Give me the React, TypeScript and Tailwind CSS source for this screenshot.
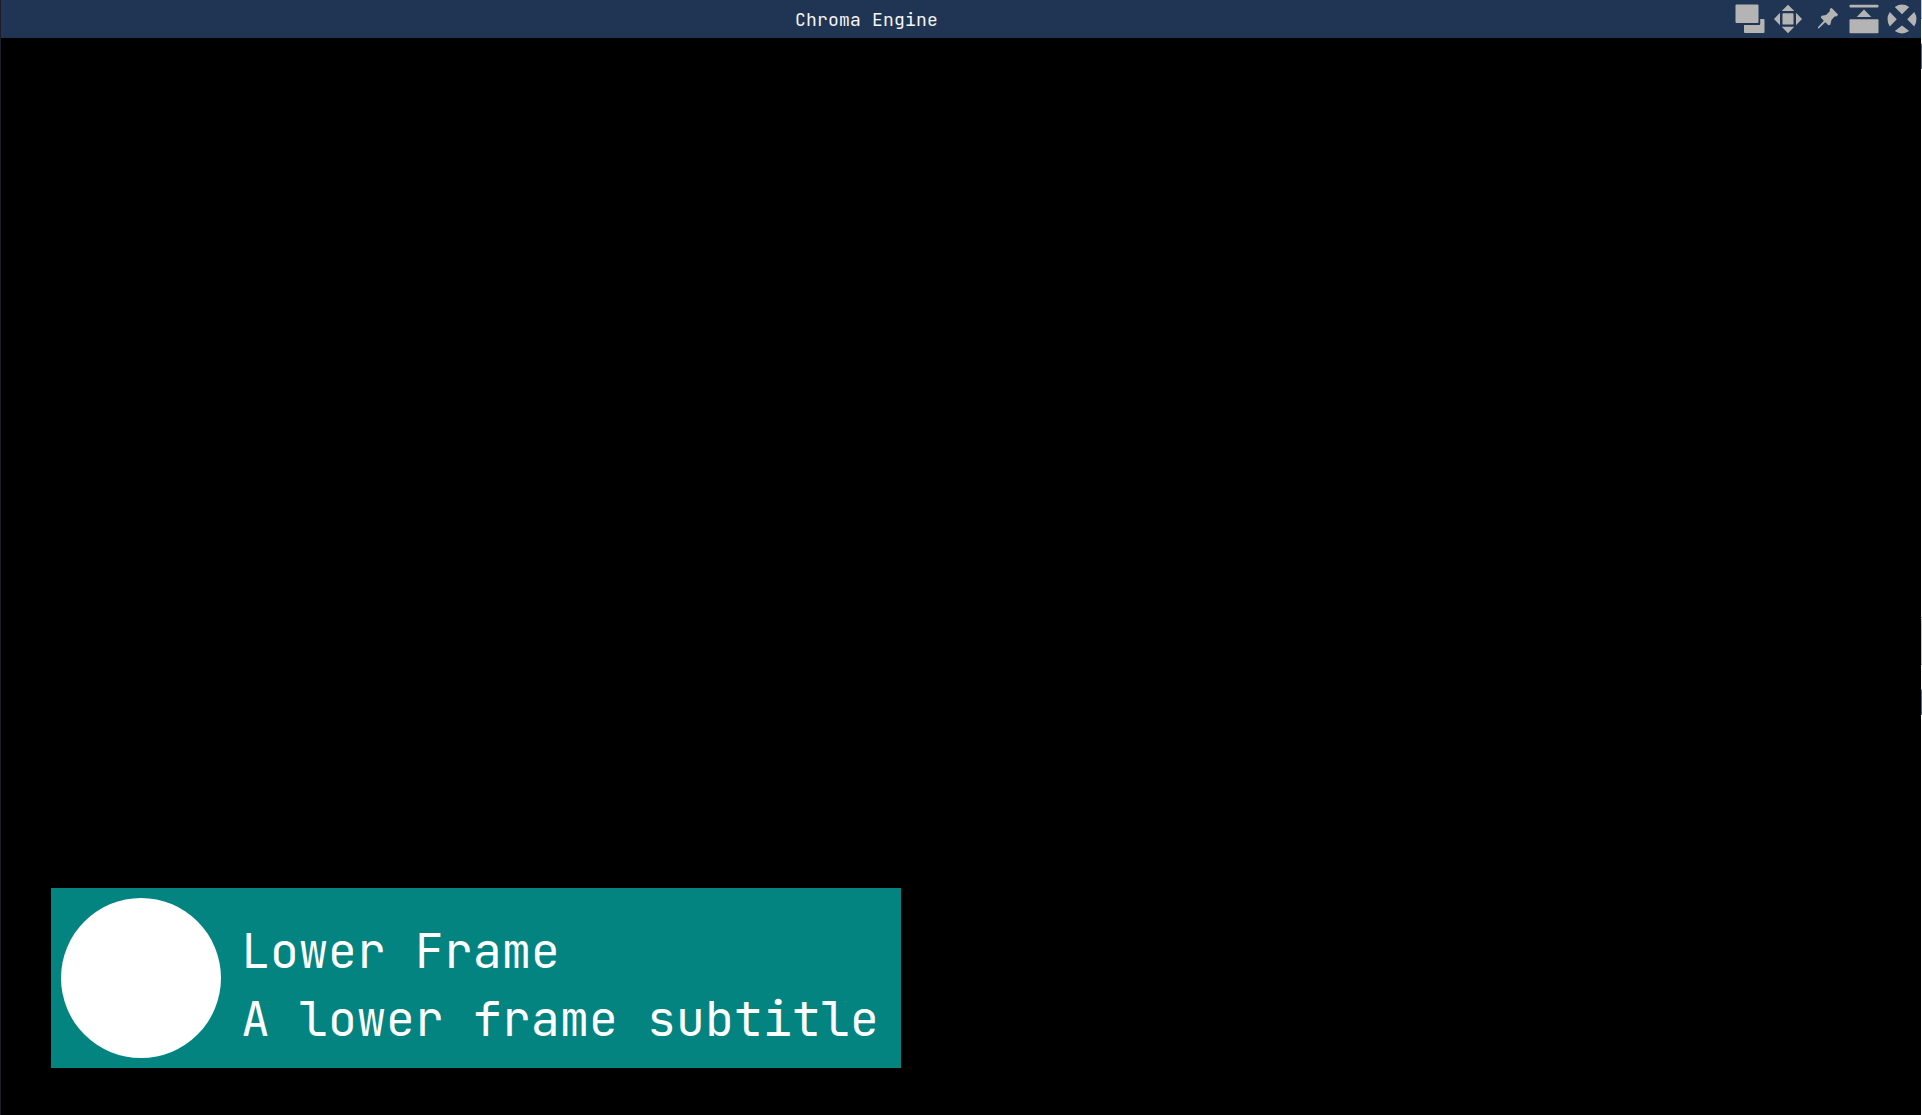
import React from "react";

function WindowButtons() {
  return (
    <svg className="block h-[38px] w-[191px] shrink-0" viewBox="1730 0 191 38" fill="#b4b4b4">
      <rect x="1735.5" y="4.5" width="23" height="18.5" rx="1" />
      <path d="M1760.2 19H1763.5Q1764.5 19 1764.5 20V32Q1764.5 33 1763.5 33H1745Q1744 33 1744 32V25H1759.2Q1760.2 25 1760.2 24Z" />
      <rect x="1782.5" y="13.2" width="11" height="11.4" rx="0.7" />
      <path d="M1788 4.7L1794.3 11H1781.7ZM1788 33.3L1781.7 26.8H1794.3ZM1774 19L1780 12.8V25.2ZM1802 19L1796 12.8V25.2Z" />
      <path d="M1831.7 8L1838 14.6L1837 16.2L1834.6 16.6L1831.5 20.1L1830.3 24.8L1828.4 25.3L1825.3 22.3L1819 28.3L1817.8 28.4L1818.1 26.9L1823.8 20.8L1820.7 17.5L1821.6 15.7L1826 15L1829.6 11.4L1830 8.8Z" />
      <rect x="1849.5" y="4.8" width="29" height="2.7" rx="1" />
      <path d="M1864 9.4L1871.3 17H1856.7Z" />
      <rect x="1849.5" y="19.2" width="29" height="14" rx="1" />
      <path d="M1894.8 7Q1902 2.2 1909.2 7L1902 14.2ZM1894.8 31Q1902 35.8 1909.2 31L1902 25.4ZM1889.8 12Q1885.2 19 1889.8 26.4L1896.8 19.2ZM1914.2 12Q1918.8 19 1914.2 26.4L1907.2 19.2Z" />
    </svg>
  );
}

function TitleBar() {
  return (
    <header className="flex h-[38px] items-center justify-between bg-[#203453]">
      <h1 className="w-[1729px] pl-[2px] pt-px text-center text-[18px] leading-[38px] tracking-[0.2px] text-[#f4f6f8]">
        Chroma Engine
      </h1>
      <WindowButtons />
    </header>
  );
}

/* Sliver of the neighbouring window along the right edge. */
function EdgeStrip() {
  return (
    <div className="flex w-px shrink-0 flex-col bg-white">
      <div className="h-[18px] bg-[#c9c9c9]" />
      <div className="h-px bg-[#999999]" />
      <div className="mt-6 h-px bg-[#cccccc]" />
      <div className="h-[25px] bg-[#3a72c4]" />
      <div className="mt-[548px] h-px bg-[#bbbbbb]" />
      <div className="mt-px h-[45px] bg-[#cccccc]" />
      <div className="h-px bg-[#999999]" />
      <div className="mt-6 h-px bg-[#bbbbbb]" />
      <div className="h-[25px] bg-[#3a72c4]" />
    </div>
  );
}

export default function App() {
  return (
    <div className="flex h-[1115px] w-[1922px] overflow-hidden border-l border-[#1c1c2c] bg-black font-['JetBrains_Mono','DejaVu_Sans_Mono',monospace]">
      <div className="flex min-w-0 flex-1 flex-col">
        <TitleBar />
        <main className="flex min-h-0 flex-1">
          <section className="mb-[47px] ml-[50px] flex h-[180px] w-[850px] gap-5 self-end bg-[#038481] p-[10px]">
            <div className="size-40 rounded-full bg-white" />
            <div className="whitespace-pre pt-[19px] text-[48px] leading-[68px] tracking-[0.2px] text-white">
              <p>Lower Frame</p>
              <p>A lower frame subtitle</p>
            </div>
          </section>
        </main>
      </div>
      <EdgeStrip />
    </div>
  );
}
